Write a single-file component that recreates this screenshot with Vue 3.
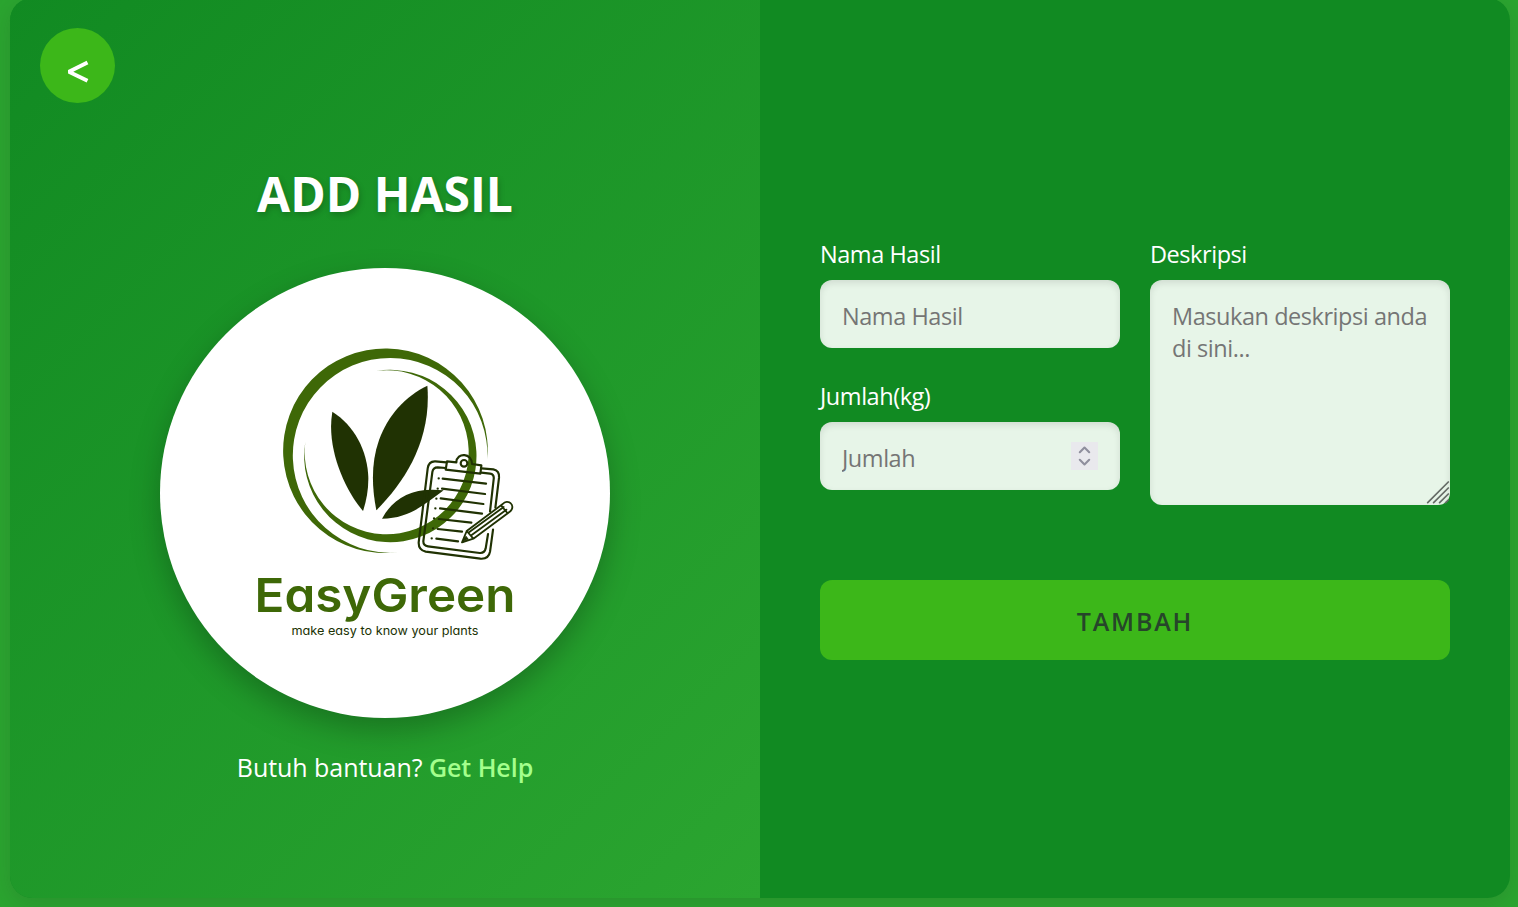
<script setup>
import { ref } from 'vue'

const name = ref('')
const amount = ref('')
const description = ref('')
</script>

<template>
  <main class="page">
    <div class="card">
      <section class="intro">
        <button class="back" type="button" aria-label="Kembali">
          <svg width="75" height="75" viewBox="0 0 75 75">
            <path d="M47.5 34.4 L28.9 43.8 L47.5 52.8" fill="none" stroke="#fff" stroke-width="3.9" stroke-linejoin="bevel" />
          </svg>
        </button>
        <h1><span>ADD HASIL</span></h1>
        <div class="logo">
          <svg width="450" height="450" viewBox="0 0 450 450">
            <g transform="translate(109.7 67) scale(.33333)">
              <g fill="#3e6807">
                <path d="M653 375 A307 307 0 1 0 385 652 A292 292 0 1 1 653 375Z" />
                <path d="M320 108 A258.5 258.5 0 1 1 107 320 A246 246 0 1 0 320 108Z" />
              </g>
              <g fill="#203203">
                <path d="M188 230 C252 270 294 345 296 430 C296 466 290 498 280 528 C223 462 169 335 188 230Z" />
                <path d="M473 152 C407 184 355 240 328 315 C304 383 306 455 320 526 C407 439 486 315 473 152Z" />
                <path d="M337 551 C371 488 430 455 522 466 C472 501 423 551 337 551Z" />
              </g>
              <g fill="none" stroke="#203203" stroke-width="6.5" stroke-linecap="round" stroke-linejoin="round">
                <path d="M530 382 L497 379 Q477 378 474 400 L447 622 Q446 645 468 650 L632 671 Q657 673 661 650 L670 584" />
                <path d="M635 400 L671 403 Q690 407 688 428 L677 518" />
                <path d="M528 399 L504 397 Q490 397 488 411 L461 618 Q460 632 475 634 L630 654 Q645 655 648 640 L655 597" />
                <path d="M635 413 L661 416 Q674 418 672 432 L661 529" />
                <path d="M532 379 L560 382 C561 351 608 354 607 387 L635 391 L632 416 L528 404Z" />
                <circle cx="583" cy="385" r="10" />
                <path d="M519 431 L649 446 M517 461 L646 477 M513 490 L641 507 M511 520 L637 536 M507 552 L605 563 M504 582 L577 590 M500 611 L565 619" />
                <path stroke-width="7" d="M507 430h.1 M504 461h.1 M500 491h.1 M497 520h.1 M493 550h.1 M490 580h.1 M486 610h.1" />
                <path d="M577 622 L591 588 L699 507 C713 490 740 510 722 529 L611 611Z M591 588 L611 611 M599 591 L702 516 M605 601 L710 524 M694 511 L713 534" stroke-width="5.5" />
                <path d="M577 622 L589 604 L595 612Z" fill="#203203" stroke-width="3" />
              </g>
            </g>
            <text class="brand" x="94.5" y="344" textLength="261" lengthAdjust="spacingAndGlyphs">EasyGreen</text>
            <text class="tagline" x="131.5" y="366.5" textLength="187" lengthAdjust="spacingAndGlyphs">make easy to know your plants</text>
          </svg>
        </div>
        <p class="help"><span>Butuh bantuan?</span> <a href="#">Get Help</a></p>
      </section>

      <form class="form" @submit.prevent>
        <div class="fields">
          <div class="column">
            <label>
              <span>Nama Hasil</span>
              <input v-model="name" type="text" placeholder="Nama Hasil">
            </label>
            <label>
              <span>Jumlah(kg)</span>
              <div class="control">
                <input v-model="amount" type="text" inputmode="numeric" placeholder="Jumlah">
                <svg class="spinner" width="27" height="28" viewBox="0 0 27 28">
                  <rect width="27" height="28" fill="#e9e9ed" />
                  <path d="M8.8 10.2 L13.5 5.6 L18.2 10.2 M8.8 17.8 L13.5 22.4 L18.2 17.8" fill="none" stroke="#8f8f9d" stroke-width="2.1" stroke-linecap="round" stroke-linejoin="round" />
                </svg>
              </div>
            </label>
          </div>
          <label>
            <span>Deskripsi</span>
            <div class="control">
              <textarea v-model="description" placeholder="Masukan deskripsi anda di sini..."></textarea>
              <svg class="grip" width="24" height="24" viewBox="0 0 24 24">
                <path d="M1.7 21.6 L22.3 1 M7.6 21.6 L22.3 7 M13.6 21.6 L22.3 13 M19.6 21.6 L22.3 19" stroke="#656b66" stroke-width="1.7" stroke-linecap="round" />
              </svg>
            </div>
          </label>
        </div>
        <button class="submit" type="submit">TAMBAH</button>
      </form>
    </div>
  </main>
</template>

<style>
body {
  margin: 0;
  overflow: hidden;
}
</style>

<style scoped>
* {
  box-sizing: border-box;
}

.page {
  display: flex;
  align-items: flex-start;
  height: 907px;
  overflow: hidden;
  padding-left: 10px;
  background: #2ba530;
  font-family: "Open Sans", "Noto Sans", sans-serif;
  color: #fff;
}

.card {
  display: flex;
  flex: none;
  width: 1500px;
  height: 900px;
  margin-top: -2px;
  overflow: hidden;
  border-radius: 22.5px;
  background: #118a22;
  box-shadow: 0 6px 22px rgba(40, 90, 40, 0.25);
}

.intro {
  position: relative;
  display: flex;
  flex-direction: column;
  align-items: center;
  width: 750px;
  padding-top: 163px;
  background: linear-gradient(135deg, #118a22, #2ba530);
}

.back {
  position: absolute;
  top: 30px;
  left: 30px;
  width: 75px;
  height: 75px;
  padding: 0;
  border: 0;
  border-radius: 50%;
  background: #3cb719;
}

.back svg {
  display: block;
}

h1 {
  height: 66px;
  margin: 0 0 41px;
  font-size: 48px;
  line-height: 66px;
  font-weight: 700;
  white-space: nowrap;
  text-shadow: 1.5px 3px 6px rgba(0, 0, 0, 0.2);
}

.logo {
  width: 450px;
  height: 450px;
  border-radius: 50%;
  background: #fff;
  box-shadow: 0 12px 30px rgba(0, 0, 0, 0.25);
}

.logo svg {
  display: block;
}

.brand {
  font-family: Inter, sans-serif;
  font-size: 47px;
  font-weight: 600;
  font-feature-settings: "cv11";
  fill: #3e6807;
}

.tagline {
  font-family: Inter, sans-serif;
  font-size: 12px;
  font-feature-settings: "cv11";
  fill: #203203;
}

.help {
  margin: 30px 0 0;
  font-size: 25px;
  line-height: 38px;
  letter-spacing: -0.05px;
  white-space: nowrap;
}

.help a {
  color: #a4ff8c;
  font-weight: 600;
  text-decoration: none;
}

.form {
  width: 750px;
  padding: 238px 60px 0;
}

.fields {
  display: grid;
  grid-template-columns: 300px 300px;
  gap: 30px;
}

.column {
  display: flex;
  flex-direction: column;
  gap: 30px;
}

label {
  display: block;
}

label > span {
  display: block;
  height: 44px;
  font-size: 23.5px;
  line-height: 37px;
  letter-spacing: -0.45px;
}

.control {
  position: relative;
}

input,
textarea {
  display: block;
  width: 300px;
  height: 68px;
  padding: 4px 22px 0;
  border: 0;
  border-radius: 12px;
  outline: 0;
  background: #e7f5e8;
  box-shadow: inset 0 3px 7.5px rgba(0, 0, 0, 0.1);
  color: #333;
  font: 23.5px/32px "Open Sans", "Noto Sans", sans-serif;
  letter-spacing: -0.45px;
}

textarea {
  height: 225px;
  padding: 20px 12px 0 22px;
  overflow: hidden;
  resize: none;
}

::placeholder {
  color: #757575;
  opacity: 1;
}

.spinner {
  position: absolute;
  top: 20px;
  right: 22px;
}

.grip {
  position: absolute;
  right: 0;
  bottom: 0;
}

.submit {
  display: block;
  width: 630px;
  height: 80px;
  margin-top: 75px;
  padding: 1px 0 0;
  border: 0;
  border-radius: 12px;
  background: #3cb719;
  color: #26452a;
  font: 600 25px/36px "Open Sans", "Noto Sans", sans-serif;
  letter-spacing: 1.8px;
}
</style>
